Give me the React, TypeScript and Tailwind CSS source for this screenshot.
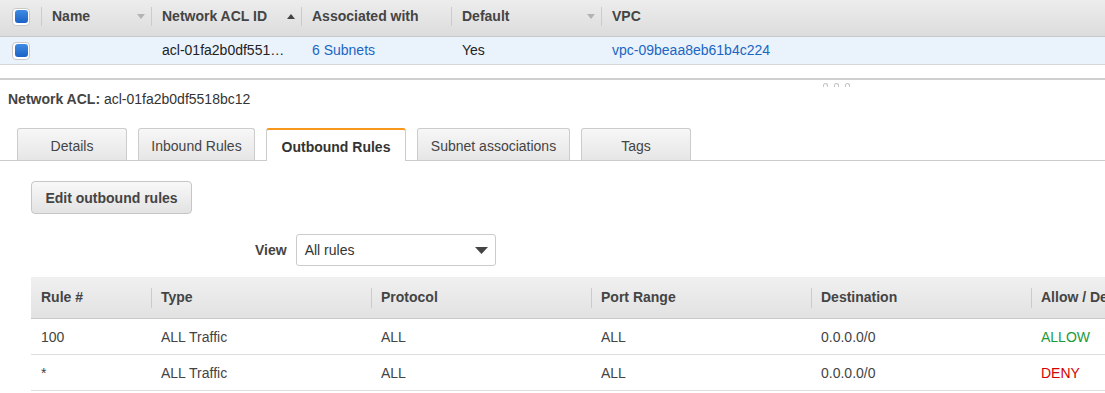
import React from 'react';

// Network ACL detail view: list table, tabs and outbound rules grid

function Checkbox() {
  return (
    <span className="flex h-[18px] w-[18px] items-center justify-center rounded-[4px] border border-[#c9c9c9] bg-white">
      <span className="h-[13px] w-[13px] rounded-[3px] bg-linear-to-b from-[#3f8be3] to-[#1a62c6]" />
    </span>
  );
}

function SortArrow({ up, dark }: { up?: boolean; dark?: boolean }) {
  return (
    <svg width="8" height="5" viewBox="0 0 8 5" className="mr-[6px] shrink-0">
      <polygon points={up ? '0,5 8,5 4,0' : '0,0 8,0 4,5'} fill={dark ? '#444' : '#b3b3b3'} />
    </svg>
  );
}

function HeadCell({ label, width, sort }: { label: string; width?: string; sort?: 'up' | 'down' }) {
  return (
    <div className={`flex h-full items-center ${width ?? 'flex-1'}`}>
      <span className="h-[19px] w-px bg-[#cbcbcb]" />
      <span className="ml-[10px] font-bold text-[#444]">{label}</span>
      <span className="flex-1" />
      {sort && <SortArrow up={sort === 'up'} dark={sort === 'up'} />}
    </div>
  );
}

const tabs = [
  { label: 'Details', w: 'w-[110px]' },
  { label: 'Inbound Rules', w: 'w-[117px]' },
  { label: 'Outbound Rules', w: 'w-[140px]', active: true },
  { label: 'Subnet associations', w: 'w-[153px]' },
  { label: 'Tags', w: 'w-[110px]' },
];

const ruleCols = [
  { label: 'Rule #', w: 'w-[120px]' },
  { label: 'Type', w: 'w-[220px]' },
  { label: 'Protocol', w: 'w-[220px]' },
  { label: 'Port Range', w: 'w-[220px]' },
  { label: 'Destination', w: 'w-[220px]' },
  { label: 'Allow / Deny', w: 'w-[220px]' },
];

const rules = [
  ['100', 'ALL Traffic', 'ALL', 'ALL', '0.0.0.0/0', 'ALLOW'],
  ['*', 'ALL Traffic', 'ALL', 'ALL', '0.0.0.0/0', 'DENY'],
];

export default function App() {
  return (
    <div className="h-[393px] w-[1105px] overflow-hidden bg-white font-['Liberation_Sans',Arial,sans-serif] text-[14px] text-[#444]">
      {/* List table */}
      <div className="flex h-[37px] items-center border-b border-[#c8c8c8] bg-linear-to-b from-[#ededed] to-[#dcdcdc] pb-[3px]">
        <div className="flex w-[41px] justify-center pl-px">
          <Checkbox />
        </div>
        <HeadCell label="Name" width="w-[110px]" sort="down" />
        <HeadCell label="Network ACL ID" width="w-[150px]" sort="up" />
        <HeadCell label="Associated with" width="w-[150px]" />
        <HeadCell label="Default" width="w-[150px]" sort="down" />
        <HeadCell label="VPC" />
      </div>
      <div className="flex h-[28px] items-center border-b border-[#d6d6d6] bg-[#eaf2fc] text-[#222]">
        <div className="flex w-[41px] justify-center pl-px">
          <Checkbox />
        </div>
        <div className="w-[110px]" />
        <div className="w-[150px] truncate pl-[11px] pr-[11px]">acl-01fa2b0df5518bc12</div>
        <div className="w-[150px] pl-[11px] text-[#1a66c2]">6 Subnets</div>
        <div className="w-[150px] pl-[11px]">Yes</div>
        <div className="flex-1 pl-[11px] text-[#1a66c2]">vpc-09beaa8eb61b4c224</div>
      </div>

      {/* Split divider with drag handle */}
      <div className="relative mt-[13px] border-t-2 border-[#cfcfcf]">
        <div className="absolute left-[823px] top-[3px] flex gap-[6px]">
          <span className="h-[4px] w-[5px] rounded-t-full border border-b-0 border-[#c4c4c4]" />
          <span className="h-[4px] w-[5px] rounded-t-full border border-b-0 border-[#c4c4c4]" />
          <span className="h-[4px] w-[5px] rounded-t-full border border-b-0 border-[#c4c4c4]" />
        </div>
      </div>

      <div className="mt-[11px] pl-[8px] leading-[16px] text-[#333]">
        <span className="font-bold text-[#444]">Network ACL:</span> acl-01fa2b0df5518bc12
      </div>

      {/* Tabs */}
      <div className="mt-[21px] flex h-[33px] items-end gap-[11px] border-b border-[#cccccc] pl-[17px]">
        {tabs.map((t) =>
          t.active ? (
            <div
              key={t.label}
              className={`${t.w} -mb-px flex h-[33px] items-center justify-center rounded-t-[3px] border-x border-t-2 border-x-[#cccccc] border-t-[#f7981c] bg-white pt-[3px] font-bold text-[#333]`}
            >
              {t.label}
            </div>
          ) : (
            <div
              key={t.label}
              className={`${t.w} flex h-[32px] items-center justify-center rounded-t-[3px] border border-b-0 border-[#cccccc] bg-linear-to-b from-[#f7f7f7] to-[#e6e6e6] pt-[3px] text-[#444]`}
            >
              {t.label}
            </div>
          ),
        )}
      </div>

      <div className="pl-[31px]">
        <button className="mt-[20px] flex h-[33px] w-[161px] items-center justify-center rounded-[4px] border border-[#c6c6c6] bg-linear-to-b from-[#f8f8f8] to-[#e3e3e3] pt-px font-bold text-[#444]">
          Edit outbound rules
        </button>

        <div className="mt-[20px] flex items-center pl-[224px]">
          <span className="font-bold text-[#444]">View</span>
          <div className="ml-[9px] flex h-[32px] w-[200px] items-center justify-between rounded-[3px] border border-[#cccccc] bg-white pl-[8px] pr-[6px] text-[#333]">
            <span>All rules</span>
            <svg width="13" height="7" viewBox="0 0 13 7" className="mr-[1px]">
              <polygon points="0,0 13,0 6.5,7" fill="#444" />
            </svg>
          </div>
        </div>

        {/* Rules table */}
        <div className="mt-[11px] w-[1200px]">
          <div className="flex h-[42px] items-center border-b border-[#c9c9c9] bg-linear-to-b from-[#f0f0f0] to-[#e2e2e2]">
            {ruleCols.map((c, i) => (
              <div key={c.label} className={`flex h-full ${c.w} shrink-0 items-center`}>
                {i > 0 ? <span className="h-[20px] w-px bg-[#cbcbcb]" /> : <span className="w-px" />}
                <span className="ml-[9px] font-bold text-[#444]">{c.label}</span>
              </div>
            ))}
          </div>
          {rules.map((r, ri) => (
            <div key={ri} className="flex h-[36px] items-center border-b border-[#dddddd] pt-[2px]">
              {r.map((v, i) => (
                <div
                  key={i}
                  className={`${ruleCols[i].w} shrink-0 pl-[10px] ${
                    i === 5 ? (v === 'ALLOW' ? 'text-[#1d9a3a]' : 'text-[#d50000]') : 'text-[#444]'
                  }`}
                >
                  {v}
                </div>
              ))}
            </div>
          ))}
        </div>
      </div>
    </div>
  );
}
